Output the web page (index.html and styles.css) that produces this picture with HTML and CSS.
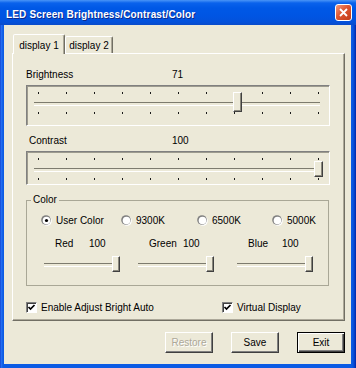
FILE: index.html
```html
<!DOCTYPE html>
<html>
<head>
  <title>LED Screen Brightness/Contrast/Color</title>
  <meta name="viewport" content="width=device-width, initial-scale=1">
  <link rel="stylesheet" href="styles.css">
</head>
<body>
  <div class="window">
    <div class="titlebar">
      <span class="title">LED Screen Brightness/Contrast/Color</span>
      <span class="close">
        <svg width="9" height="9" viewBox="0 0 9 9"><path d="M1 1 L8 8 M8 1 L1 8" stroke="#fff" stroke-width="1.8"/></svg>
      </span>
    </div>
    <div class="client">
      <div class="tabs">
        <div class="tab active">display 1</div>
        <div class="tab">display 2</div>
      </div>
      <div class="page">
        <div class="head"><span>Brightness</span><span>71</span></div>
        <div class="slider">
          <div class="ticks"><i></i><i></i><i></i><i></i><i></i><i></i><i></i><i></i><i></i><i></i><i></i></div>
          <div class="rail"><span class="thumb" style="left: 71%"></span></div>
          <div class="ticks"><i></i><i></i><i></i><i></i><i></i><i></i><i></i><i></i><i></i><i></i><i></i></div>
        </div>

        <div class="head head-2"><span>Contrast</span><span>100</span></div>
        <div class="slider short">
          <div class="ticks"><i></i><i></i><i></i><i></i><i></i><i></i><i></i><i></i><i></i><i></i><i></i></div>
          <div class="rail"><span class="thumb" style="left: 100%"></span></div>
          <div class="ticks"><i></i><i></i><i></i><i></i><i></i><i></i><i></i><i></i><i></i><i></i><i></i></div>
        </div>

        <fieldset class="group">
          <legend>Color</legend>
          <div class="modes">
            <label class="opt">
              <svg class="radio" width="11" height="11" viewBox="0 0 11 11"><circle cx="6" cy="6" r="4.8" fill="#fff"/><circle cx="5" cy="5" r="4.8" fill="#808080"/><circle cx="5.5" cy="5.5" r="3.8" fill="#fff"/><circle cx="5.5" cy="5.5" r="1.6" fill="#000"/></svg>
              User Color
            </label>
            <label class="opt">
              <svg class="radio" width="11" height="11" viewBox="0 0 11 11"><circle cx="6" cy="6" r="4.8" fill="#fff"/><circle cx="5" cy="5" r="4.8" fill="#808080"/><circle cx="5.5" cy="5.5" r="3.8" fill="#fff"/></svg>
              9300K
            </label>
            <label class="opt">
              <svg class="radio" width="11" height="11" viewBox="0 0 11 11"><circle cx="6" cy="6" r="4.8" fill="#fff"/><circle cx="5" cy="5" r="4.8" fill="#808080"/><circle cx="5.5" cy="5.5" r="3.8" fill="#fff"/></svg>
              6500K
            </label>
            <label class="opt">
              <svg class="radio" width="11" height="11" viewBox="0 0 11 11"><circle cx="6" cy="6" r="4.8" fill="#fff"/><circle cx="5" cy="5" r="4.8" fill="#808080"/><circle cx="5.5" cy="5.5" r="3.8" fill="#fff"/></svg>
              5000K
            </label>
          </div>
          <div class="chans">
            <div class="chan">
              <div class="chan-head"><span>Red</span><span>100</span></div>
              <div class="mini"><span class="thumb" style="left: 100%"></span></div>
            </div>
            <div class="chan">
              <div class="chan-head"><span>Green</span><span>100</span></div>
              <div class="mini"><span class="thumb" style="left: 100%"></span></div>
            </div>
            <div class="chan">
              <div class="chan-head"><span>Blue</span><span>100</span></div>
              <div class="mini"><span class="thumb" style="left: 100%"></span></div>
            </div>
          </div>
        </fieldset>

        <div class="checks">
          <label class="check">
            <span class="box"><svg width="9" height="9" viewBox="0 0 9 9"><path d="M1.5 4 L3.5 6 L7.5 2" fill="none" stroke="#000" stroke-width="1.7"/></svg></span>
            Enable Adjust Bright Auto
          </label>
          <label class="check">
            <span class="box"><svg width="9" height="9" viewBox="0 0 9 9"><path d="M1.5 4 L3.5 6 L7.5 2" fill="none" stroke="#000" stroke-width="1.7"/></svg></span>
            Virtual Display
          </label>
        </div>
      </div>

      <div class="buttons">
        <button class="btn" disabled>Restore</button>
        <button class="btn">Save</button>
        <button class="btn default">Exit</button>
      </div>
    </div>
  </div>
</body>
</html>
```

FILE: styles.css
```css
* {
  box-sizing: border-box;
}
body {
  margin: 0;
  font-family: "Liberation Sans", Arial, sans-serif;
  font-size: 10px;
  color: #000;
  background: #fff;
}
.window {
  width: 356px;
  height: 368px;
  display: flex;
  flex-direction: column;
  background: linear-gradient(to right, #0a32c4 0, #2a73f5 1px, #0b5be4 3px, #0b5be4 calc(100% - 4px), #0848d2 calc(100% - 2px), #0026a8 100%);
}
.titlebar {
  height: 25px;
  display: flex;
  align-items: center;
  padding: 0 4px 0 6px;
  color: #fff;
  background: linear-gradient(#4a95f7 0, #0a62ec 3px, #0058e6 8px, #0055e3 16px, #0351db 22px, #0a4bc9 25px);
}
.title {
  flex: 1;
  font-weight: bold;
  letter-spacing: .15px;
  padding-top: 4px;
  text-shadow: 1px 1px #0f2a8a;
}
.close {
  width: 17px;
  height: 17px;
  display: flex;
  align-items: center;
  justify-content: center;
  border: 1px solid #fff;
  border-radius: 3px;
  background: linear-gradient(135deg, #f19a80, #dd5530 45%, #c23c18);
}
.client {
  flex: 1;
  margin: 0 5px 4px 4px;
  padding: 9px 6px 0 8px;
  background: #ece9d8;
}

/* tabs */
.tabs {
  display: flex;
  align-items: flex-end;
  padding-left: 1px;
  position: relative;
  z-index: 1;
}
.tab {
  width: 48px;
  height: 17px;
  padding-top: 2px;
  text-align: center;
  line-height: 13px;
  background: #ece9d8;
  border: 1px solid;
  border-bottom: 0;
  border-color: #fff #716f64 transparent #fff;
  border-radius: 2px 2px 0 0;
  box-shadow: inset -1px 0 #aca899;
}
.tab.active {
  width: 52px;
  height: 20px;
  padding-top: 4px;
  margin-bottom: -1px;
}
.page {
  height: 268px;
  border: 1px solid;
  border-color: #fff #716f64 #716f64 #fff;
  box-shadow: inset -1px -1px #aca899;
  padding: 14px 0 0 13px;
}

/* sliders */
.head {
  display: grid;
  grid-template-columns: 146px auto;
  line-height: 13px;
}
.head-2 {
  margin-top: 8px;
}
.head-2 span:first-child {
  padding-left: 3px;
}
.slider {
  width: 304px;
  margin-top: 4px;
  padding: 6px 10px 11px 11px;
  border: 1px solid;
  border-color: #808080 #fff #fff #808080;
  box-shadow: inset 1px 1px #9d9b8e;
}
.slider.short {
  padding-bottom: 4px;
}
.ticks {
  display: flex;
  justify-content: space-between;
  height: 2px;
}
.ticks i {
  width: 1px;
  background: #1a1a1a;
}
.rail {
  position: relative;
  height: 2px;
  margin: 8px 0;
}
.rail::before,
.mini::before {
  content: "";
  position: absolute;
  left: -4px;
  right: -1px;
  top: 0;
  height: 2px;
  border-top: 1px solid #7d7b6e;
  border-bottom: 1px solid #fff;
}
.thumb {
  position: absolute;
  top: -10px;
  width: 9px;
  height: 20px;
  margin-left: -5px;
  background: #ece9d8;
  border: 1px solid;
  border-color: #fff #404040 #404040 #fff;
  box-shadow: inset -1px -1px #8a887c;
}
.short .thumb {
  top: -7px;
  height: 16px;
}

/* color group */
.group {
  width: 303px;
  margin: 9px 0 0;
  padding: 8px 0 13px 0;
  min-width: 0;
  border: 1px solid #a9a796;
}
.group legend {
  margin-left: 4px;
  padding: 0 2px;
  line-height: 12px;
}
.modes {
  display: grid;
  grid-template-columns: 80px 76px 75px auto;
  padding-left: 14px;
  line-height: 13px;
}
.opt,
.check {
  display: flex;
  align-items: center;
  gap: 4px;
}
.chans {
  display: grid;
  grid-template-columns: 94px 99px auto;
  padding-left: 17px;
  margin-top: 10px;
}
.chan-head {
  display: flex;
  padding-left: 11px;
  line-height: 13px;
}
.chan-head span:first-child {
  width: 34px;
}
.mini {
  position: relative;
  width: 75px;
  height: 16px;
  margin-top: 6px;
}
.mini::before {
  left: 0;
  right: 0;
  top: 7px;
}
.mini .thumb {
  top: 0;
  width: 8px;
  height: 16px;
  margin-left: -7px;
}

/* checkboxes */
.checks {
  display: grid;
  grid-template-columns: 196px auto;
  margin-top: 15px;
  line-height: 13px;
}
.box {
  width: 11px;
  height: 11px;
  display: flex;
  align-items: center;
  justify-content: center;
  background: #fff;
  border: 1px solid;
  border-color: #808080 #fff #fff #808080;
  box-shadow: inset 1px 1px #404040;
}

/* buttons */
.buttons {
  display: flex;
  justify-content: flex-end;
  gap: 18px;
  margin-top: 11px;
}
.btn {
  width: 48px;
  height: 21px;
  padding: 0;
  font: inherit;
  color: #000;
  background: #ece9d8;
  border: 1px solid;
  border-color: #fff #404040 #404040 #fff;
  box-shadow: inset -1px -1px #808080;
}
.btn:disabled {
  color: #aca899;
  text-shadow: 1px 1px #fff;
}
.btn.default {
  border: 1px solid #000;
  box-shadow: inset 1px 1px #fff, inset -1px -1px #404040, inset -2px -2px #808080;
}
```
